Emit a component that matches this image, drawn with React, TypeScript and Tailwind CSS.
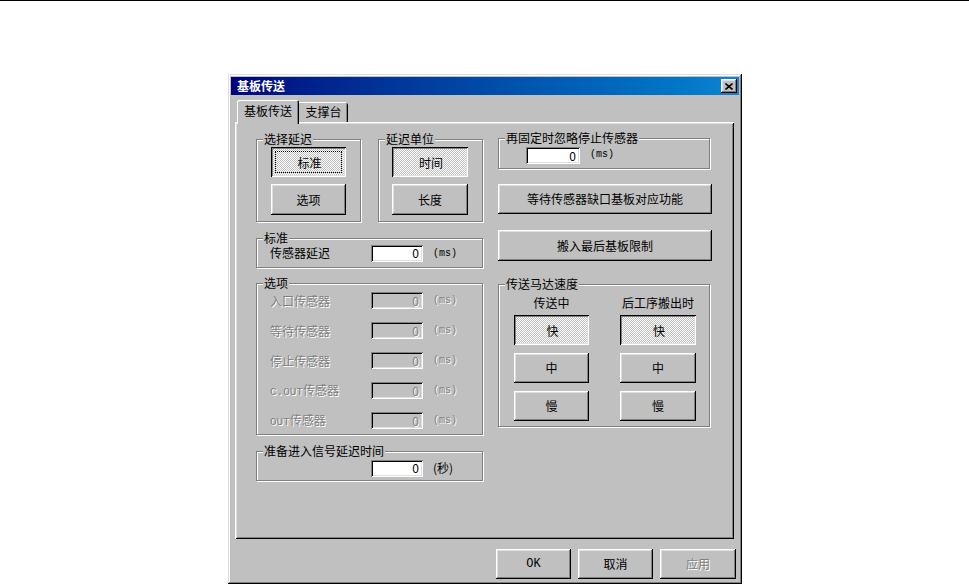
import type { ReactNode } from "react";

const raised =
  "shadow-[inset_-1px_-1px_#000,inset_1px_1px_#fff,inset_-2px_-2px_#808080,inset_2px_2px_#dfdfdf]";
const pressed =
  "shadow-[inset_1px_1px_#000,inset_-1px_-1px_#fff,inset_2px_2px_#808080,inset_-2px_-2px_#dfdfdf] bg-[image:repeating-conic-gradient(#fff_0_25%,#c0c0c0_0_50%)] bg-size-[2px_2px]";
const sunken =
  "shadow-[inset_1px_1px_#808080,inset_-1px_-1px_#fff,inset_2px_2px_#000,inset_-2px_-2px_#dfdfdf]";
const disabledText = "text-[#808080] [text-shadow:1px_1px_0_#fff]";

function Button({
  children,
  active,
  focus,
  className = "",
}: {
  children: ReactNode;
  active?: boolean;
  focus?: boolean;
  className?: string;
}) {
  return (
    <div
      className={`relative flex items-center justify-center leading-none ${active ? pressed : `bg-[#c0c0c0] ${raised}`} ${className}`}
    >
      {focus && <span className="absolute inset-[4px] border border-dotted border-black" />}
      <span className={active ? "translate-x-[1px] translate-y-[1px]" : ""}>{children}</span>
    </div>
  );
}

function Group({ label, className = "", children }: { label: string; className?: string; children?: ReactNode }) {
  return (
    <div className={`relative border border-[#808080] shadow-[1px_1px_0_#fff,inset_1px_1px_0_#fff] ${className}`}>
      <span className="absolute -top-[9px] left-[6px] bg-[#c0c0c0] px-[1px] leading-[16px] whitespace-nowrap">
        {label}
      </span>
      {children}
    </div>
  );
}

function Field({ value = "0", disabled, className = "" }: { value?: string; disabled?: boolean; className?: string }) {
  return (
    <div
      className={`flex h-[17px] items-center justify-end pr-[4px] leading-none ${sunken} ${disabled ? `bg-[#c0c0c0] ${disabledText}` : "bg-white"} ${className}`}
    >
      {value}
    </div>
  );
}

function Unit({ children, disabled }: { children: ReactNode; disabled?: boolean }) {
  return (
    <span className={`ml-[10px] text-[10px] font-['Liberation_Mono',monospace] ${disabled ? disabledText : ""}`}>
      {children}
    </span>
  );
}

const optionRows: { label: ReactNode }[] = [
  { label: "入口传感器" },
  { label: "等待传感器" },
  { label: "停止传感器" },
  { label: <><span className="font-['Liberation_Mono',monospace] text-[11px]">C.OUT</span>传感器</> },
  { label: <><span className="font-['Liberation_Mono',monospace] text-[11px]">OUT</span>传感器</> },
];

function CloseButton() {
  return (
    <div className={`flex h-[14px] w-[16px] items-center justify-center bg-[#c0c0c0] ${raised}`}>
      <svg width="8" height="7" viewBox="0 0 8 7">
        <path d="M0.5 0.5L7.5 6.5M7.5 0.5L0.5 6.5" stroke="#000" strokeWidth="1.6" />
      </svg>
    </div>
  );
}

export default function App() {
  return (
    <div className="h-[585px] w-[969px] overflow-hidden bg-white text-[12px] text-black font-['Noto_Sans_CJK_SC','Noto_Sans',sans-serif]">
      <div className="h-[1px] bg-black" />
      <div className="pl-[228px] pt-[73px]">
        <div className="flex h-[510px] w-[514px] flex-col bg-[#c0c0c0] p-[3px] shadow-[inset_-1px_-1px_#000,inset_1px_1px_#dfdfdf,inset_-2px_-2px_#808080,inset_2px_2px_#fff]">
          {/* Title bar */}
          <div className="flex h-[18px] items-center justify-between bg-gradient-to-r from-[#000080] to-[#1084d0] pl-[6px] pr-[2px]">
            <span className="font-bold leading-none text-white">基板传送</span>
            <CloseButton />
          </div>

          {/* Tabs */}
          <div className="mt-[5px] ml-[6px] flex h-[22px] items-end">
            <div className="relative z-10 -mb-[2px] flex h-[24px] w-[62px] items-start justify-center rounded-t-[2px] bg-[#c0c0c0] pt-[3px] leading-[16px] shadow-[inset_1px_1px_#fff,inset_-1px_0_#000,inset_-2px_0_#808080]">
              基板传送
            </div>
            <div className="flex h-[20px] w-[49px] items-start justify-center rounded-tr-[2px] pt-[2px] leading-[16px] shadow-[inset_0_1px_#fff,inset_-1px_0_#000,inset_-2px_0_#808080]">
              支撑台
            </div>
          </div>

          {/* Tab page */}
          <div className="ml-[4px] flex h-[417px] w-[499px] gap-[15px] pl-[21px] pt-[17px] shadow-[inset_1px_1px_#fff,inset_-1px_-1px_#000,inset_2px_2px_#dfdfdf,inset_-2px_-2px_#808080]">
            {/* Left column */}
            <div className="flex w-[227px] flex-col">
              <div className="flex justify-between">
                <Group label="选择延迟" className="h-[83px] w-[105px] pl-[14px] pt-[7px]">
                  <Button active focus className="h-[30px] w-[75px]">标准</Button>
                  <Button className="mt-[7px] h-[31px] w-[75px]">选项</Button>
                </Group>
                <Group label="延迟单位" className="h-[83px] w-[105px] pl-[13px] pt-[7px]">
                  <Button active className="h-[30px] w-[76px]">时间</Button>
                  <Button className="mt-[7px] h-[31px] w-[76px]">长度</Button>
                </Group>
              </div>

              <Group label="标准" className="mt-[16px] flex h-[30px] items-center pl-[13px]">
                <span className="w-[101px]">传感器延迟</span>
                <Field className="w-[52px]" />
                <Unit>(ms)</Unit>
              </Group>

              <Group label="选项" className="mt-[15px] flex h-[152px] flex-col gap-[13px] pl-[13px] pt-[8px]">
                {optionRows.map((row, i) => (
                  <div key={i} className="flex h-[17px] items-center">
                    <span className={`w-[101px] ${disabledText}`}>{row.label}</span>
                    <Field disabled className="w-[52px]" />
                    <Unit disabled>(ms)</Unit>
                  </div>
                ))}
              </Group>

              <Group label="准备进入信号延迟时间" className="mt-[16px] h-[30px] pl-[114px] pt-[7px]">
                <div className="flex items-center">
                  <Field className="w-[52px]" />
                  <span className="ml-[10px]">(秒)</span>
                </div>
              </Group>
            </div>

            {/* Right column */}
            <div className="-mt-[1px] flex w-[214px] flex-col">
              <Group label="再固定时忽略停止传感器" className="flex h-[31px] w-[212px] items-start pl-[27px] pt-[8px]">
                <Field className="w-[54px]" />
                <Unit>(ms)</Unit>
              </Group>
              <Button className="mt-[15px] h-[30px] w-[214px]">等待传感器缺口基板对应功能</Button>
              <Button className="mt-[16px] h-[31px] w-[214px]">搬入最后基板限制</Button>

              <Group label="传送马达速度" className="mt-[23px] h-[143px] w-[212px] pl-[15px] pt-[10px]">
                <div className="grid grid-cols-[75px_76px] gap-x-[31px]">
                  <div className="h-[16px] text-center leading-[16px]">传送中</div>
                  <div className="h-[16px] text-center leading-[16px] whitespace-nowrap">后工序搬出时</div>
                </div>
                <div className="mt-[4px] grid grid-cols-[75px_76px] gap-x-[31px] gap-y-[8px]">
                  <Button active className="h-[30px]">快</Button>
                  <Button active className="h-[30px]">快</Button>
                  <Button className="h-[30px]">中</Button>
                  <Button className="h-[30px]">中</Button>
                  <Button className="h-[30px]">慢</Button>
                  <Button className="h-[30px]">慢</Button>
                </div>
              </Group>
            </div>
          </div>

          {/* Dialog buttons */}
          <div className="mt-[10px] flex justify-end gap-[7px] pr-[3px]">
            <Button className="h-[30px] w-[75px] font-['Liberation_Mono',monospace]">OK</Button>
            <Button className="h-[30px] w-[75px]">取消</Button>
            <Button className={`h-[30px] w-[76px] ${disabledText}`}>应用</Button>
          </div>
        </div>
      </div>
    </div>
  );
}
